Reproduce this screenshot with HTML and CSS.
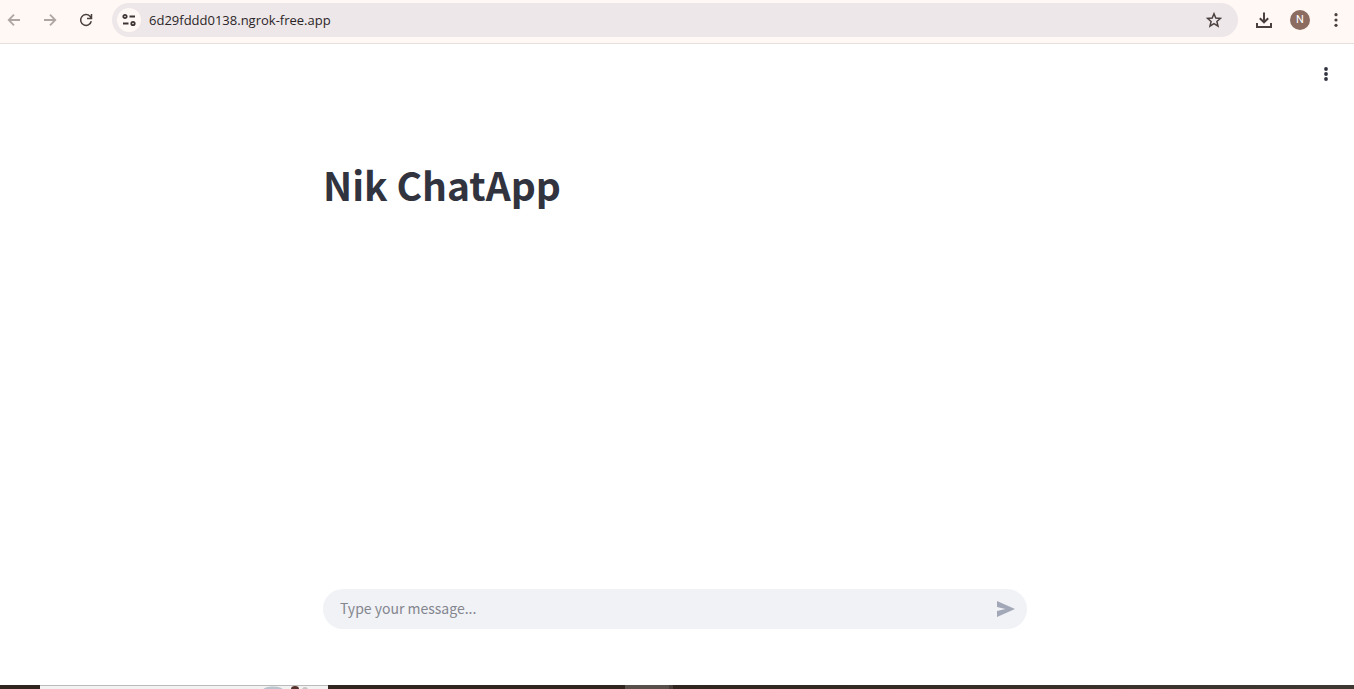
FILE: index.html
```html
<!DOCTYPE html>
<html lang="en">
<head>
<meta charset="utf-8">
<meta name="viewport" content="width=device-width, initial-scale=1">
<title>Nik ChatApp</title>
<link rel="stylesheet" href="styles.css">
</head>
<body>
<header class="toolbar">
  <nav class="nav" aria-label="History">
    <button class="icon-btn muted" type="button" aria-label="Back"><svg class="bold" viewBox="0 0 16 16"><path d="M14 8H3M8 2.700 2.700 8 8 13.300"/></svg></button>
    <button class="icon-btn muted" type="button" aria-label="Forward"><svg class="bold" viewBox="0 0 16 16"><path d="M2 8h11M8 2.700 13.300 8 8 13.300"/></svg></button>
    <button class="icon-btn" type="button" aria-label="Reload"><svg viewBox="0 0 16 16"><path d="M13.300 9.300A5.400 5.400 0 1 1 12 4.300L13.300 6M13.500 2v4.500H9"/></svg></button>
  </nav>
  <div class="address">
    <button class="site-info" type="button" aria-label="Site information"><svg class="bold" viewBox="0 0 16 16"><circle cx="4" cy="4.500" r="1.700"/><path d="M8.500 4.500H14M2 11.500h5.500"/><circle cx="12" cy="11.500" r="1.700"/></svg></button>
    <input class="url" type="text" aria-label="Address" value="6d29fddd0138.ngrok-free.app" spellcheck="false">
    <button class="icon-btn" type="button" aria-label="Bookmark"><svg viewBox="0 0 16 16"><path d="m8 1.700 1.800 4.300 4.700.4-3.600 3.100 1.100 4.600L8 11.600l-4 2.500 1.100-4.600-3.600-3.100 4.700-.4z"/></svg></button>
  </div>
  <div class="actions">
    <button class="icon-btn" type="button" aria-label="Downloads"><svg class="download" viewBox="0 0 18 18"><path d="M9 1.500v9.500M4.800 7.200 9 11.300l4.200-4.100M2 12v4h14v-4"/></svg></button>
    <button class="avatar" type="button" aria-label="Profile">N</button>
    <button class="icon-btn" type="button" aria-label="Browser menu"><svg class="dots" viewBox="0 0 16 16"><circle cx="8" cy="2.700" r="1.600"/><circle cx="8" cy="8" r="1.600"/><circle cx="8" cy="13.300" r="1.600"/></svg></button>
  </div>
</header>
<main class="app">
  <div class="app-bar">
    <button class="icon-btn app-menu" type="button" aria-label="App menu"><svg class="dots" viewBox="0 0 16 16"><circle cx="8" cy="3" r="1.900"/><circle cx="8" cy="8" r="1.900"/><circle cx="8" cy="13" r="1.900"/></svg></button>
  </div>
  <div class="column">
    <h1>Nik ChatApp</h1>
    <form class="chat">
      <input class="message" type="text" placeholder="Type your message..." aria-label="Message">
      <button class="send" type="button" aria-label="Send"><svg viewBox="0 0 20 16"><path d="M1 0 19 8 1 16V10L9.500 8 1 6z"/></svg></button>
    </form>
  </div>
</main>
<footer class="taskbar">
  <div class="window-edge"><svg viewBox="0 0 50 3"><ellipse cx="12" cy="4" rx="10" ry="3.500" fill="#b8c3cc"/><ellipse cx="34" cy="3" rx="4" ry="3" fill="#56332a"/><ellipse cx="44" cy="4" rx="3" ry="3" fill="#c9c4c6"/></svg></div>
  <div class="task"></div>
</footer>
</body>
</html>
```
FILE: styles.css
```css
* { box-sizing: border-box; }
body {
  margin: 0;
  min-height: 100vh;
  display: flex;
  flex-direction: column;
  background: #fff;
  font-family: "Noto Sans CJK SC", "Noto Sans", sans-serif;
}
button, input { font: inherit; border: 0; padding: 0; background: none; }
input { outline: 0; min-width: 0; }
svg { display: block; fill: none; stroke: currentColor; stroke-width: 1.5; }

.toolbar {
  display: flex;
  align-items: center;
  height: 44px;
  padding: 0 6px 4px 2px;
  background: #fff8f4;
  border-bottom: 1px solid #e6dfdd;
}
.nav { display: flex; gap: 12px; margin-right: 14px; }
.icon-btn {
  display: grid;
  place-items: center;
  width: 24px;
  height: 24px;
  color: #4a403f;
}
.icon-btn svg, .site-info svg { width: 16px; height: 16px; }
.muted { color: #aea6a3; }
svg.bold { stroke-width: 1.8; }
svg.dots { fill: currentColor; stroke: none; }
.icon-btn svg.download { width: 18px; height: 18px; stroke-width: 2; }

.address {
  flex: 1;
  display: flex;
  align-items: center;
  height: 34px;
  padding: 0 12px 0 5px;
  border-radius: 17px;
  background: #ede7e9;
}
.site-info {
  display: grid;
  place-items: center;
  width: 24px;
  height: 24px;
  border-radius: 50%;
  background: #fff8f4;
  color: #3d3535;
}
.url {
  flex: 1;
  margin-left: 8px;
  font: 13px/20px "Open Sans", sans-serif;
  color: #2b2527;
}
.actions { display: flex; align-items: center; gap: 14px; margin-left: 14px; }
.avatar {
  width: 20px;
  height: 20px;
  border-radius: 50%;
  background: #8c6c60;
  color: #fff;
  font: 11px/20px Roboto, sans-serif;
}

.app { flex: 1; display: flex; flex-direction: column; padding-right: 4px; }
.app-bar { display: flex; justify-content: flex-end; padding: 18px 12px; }
.app-menu { color: #31333f; }
.column {
  flex: 1;
  display: flex;
  flex-direction: column;
  width: calc(100% - 32px);
  max-width: 704px;
  margin: 0 auto;
  padding-bottom: 56px;
}
h1 {
  margin: 54px 0 0;
  font-size: 39px;
  line-height: 52px;
  font-weight: 700;
  color: #31333f;
}
.chat {
  display: flex;
  align-items: center;
  height: 40px;
  margin-top: auto;
  padding: 0 11px 0 17px;
  border-radius: 20px;
  background: #f0f2f6;
}
.message { flex: 1; height: 40px; padding-bottom: 3px; font-size: 14px; line-height: 24px; color: #31333f; }
.message::placeholder { color: #84868f; opacity: 1; }
.send { color: #a3a8b8; }
.send svg { width: 20px; height: 16px; fill: currentColor; stroke: none; }

.taskbar { display: flex; height: 4px; padding-left: 40px; background: linear-gradient(90deg, #30251f 50%, #3f3832); }
.window-edge {
  display: flex;
  justify-content: flex-end;
  width: 288px;
  padding-right: 17px;
  border-top: 1px solid #bbb;
  background: #f2f2f2;
}
.window-edge svg { width: 50px; height: 3px; stroke: none; }
.task { width: 48px; margin-left: 297px; background: #5a504b; border-right: 4px solid #483e39; }
```
